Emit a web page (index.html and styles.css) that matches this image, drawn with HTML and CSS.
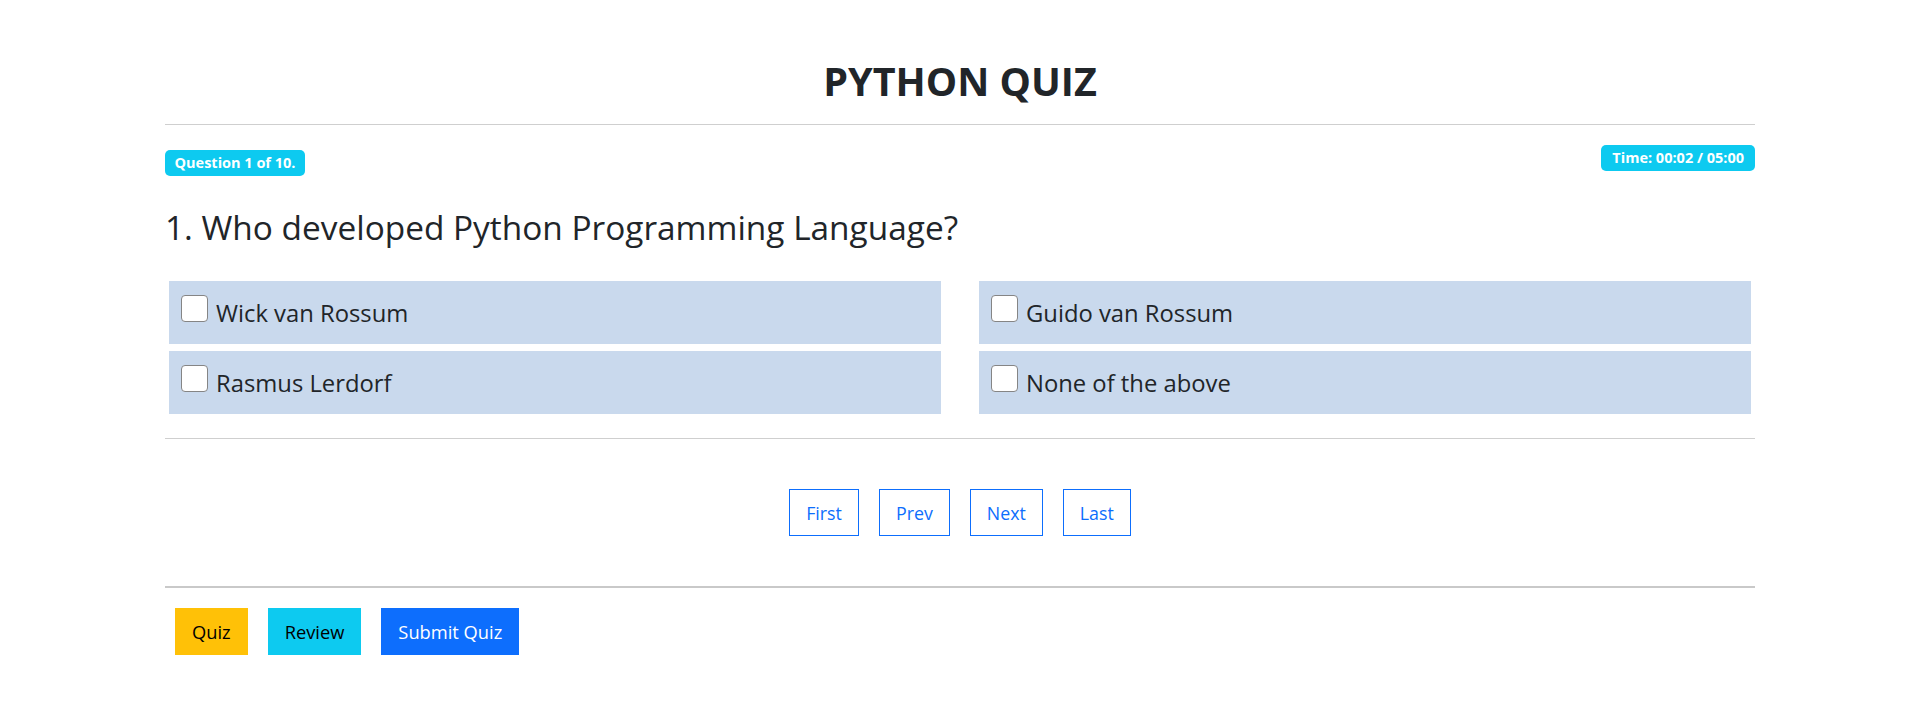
FILE: index.html
```html
<!DOCTYPE html>
<html lang="en">
<head>
<meta charset="utf-8">
<title>Python Quiz</title>
<link rel="stylesheet" href="styles.css">
</head>
<body>
<div class="container">
  <h1 class="title">PYTHON QUIZ</h1>
  <hr class="rule">
  <div class="meta">
    <span class="badge badge-left">Question 1 of 10.</span>
    <span class="badge badge-time">Time: 00:02 / 05:00</span>
  </div>
  <h2 class="question">1. Who developed Python Programming Language?</h2>
  <div class="options">
    <label class="option"><input type="checkbox" class="check"><span>Wick van Rossum</span></label>
    <label class="option"><input type="checkbox" class="check"><span>Guido van Rossum</span></label>
    <label class="option"><input type="checkbox" class="check"><span>Rasmus Lerdorf</span></label>
    <label class="option"><input type="checkbox" class="check"><span>None of the above</span></label>
  </div>
  <hr class="rule rule-mid">
  <div class="pager">
    <button class="page-btn">First</button>
    <button class="page-btn">Prev</button>
    <button class="page-btn">Next</button>
    <button class="page-btn">Last</button>
  </div>
  <hr class="rule rule-bottom">
  <div class="actions">
    <button class="act act-quiz">Quiz</button>
    <button class="act act-review">Review</button>
    <button class="act act-submit">Submit Quiz</button>
  </div>
</div>
</body>
</html>
```
FILE: styles.css
```css
* { box-sizing: border-box; }
html, body {
  margin: 0;
  padding: 0;
  background: #fff;
}
body {
  font-family: "Open Sans", "Noto Sans", sans-serif;
  color: #212529;
}
.container {
  width: 1590px;
  margin: 0 auto;
  padding-top: 57px;
}
.title {
  margin: 0;
  font-size: 39.5px;
  line-height: 48px;
  font-weight: 700;
  text-align: center;
}
.rule {
  margin: 19px 0 0;
  border: 0;
  border-top: 1px solid #cfcfcf;
  height: 0;
}
.meta {
  margin-top: 20px;
  display: flex;
  justify-content: space-between;
  align-items: flex-start;
}
.badge {
  display: inline-block;
  height: 26px;
  line-height: 26px;
  padding: 0 9.5px;
  background: #0dcaf0;
  color: #fff;
  font-weight: 700;
  font-size: 14.5px;
  border-radius: 5px;
  white-space: nowrap;
}
.badge-time { padding: 0 11px; }
.badge-left { margin-top: 5px; }
.question {
  margin: 31px 0 0;
  font-size: 33.4px;
  line-height: 40px;
  font-weight: 400;
}
.options {
  margin-top: 34px;
  padding: 0 4px;
  display: grid;
  grid-template-columns: 1fr 1fr;
  column-gap: 38px;
  row-gap: 7px;
}
.option {
  height: 63px;
  background: #c9d9ed;
  padding: 14px 12px 0;
  display: flex;
  align-items: flex-start;
  font-size: 23.8px;
  line-height: 37px;
}
.check {
  appearance: none;
  -webkit-appearance: none;
  margin: 0 8px 0 0;
  width: 27px;
  height: 27px;
  flex: none;
  background: #fff;
  border: 1.5px solid #858585;
  border-radius: 4px;
}
.rule-mid { margin-top: 24px; }
.pager {
  margin-top: 50px;
  display: flex;
  justify-content: center;
  gap: 20px;
}
.page-btn {
  height: 47px;
  padding: 0 16px;
  font-family: inherit;
  font-size: 17.8px;
  color: #0d6efd;
  background: #fff;
  border: 1px solid #0d6efd;
  border-radius: 0;
}
.rule-bottom {
  margin-top: 50px;
  border-top: 2px solid #c9c9c9;
}
.actions {
  margin-top: 20px;
  padding-left: 10px;
  display: flex;
  gap: 20px;
}
.act {
  height: 47px;
  padding: 0 16px;
  font-family: inherit;
  font-size: 18.3px;
  border: 1px solid transparent;
  border-radius: 0;
  color: #000;
}
.act-quiz { background: #ffc107; border-color: #ffc107; }
.act-review { background: #0dcaf0; border-color: #0dcaf0; }
.act-submit { background: #0d6efd; border-color: #0d6efd; color: #fff; }
```
